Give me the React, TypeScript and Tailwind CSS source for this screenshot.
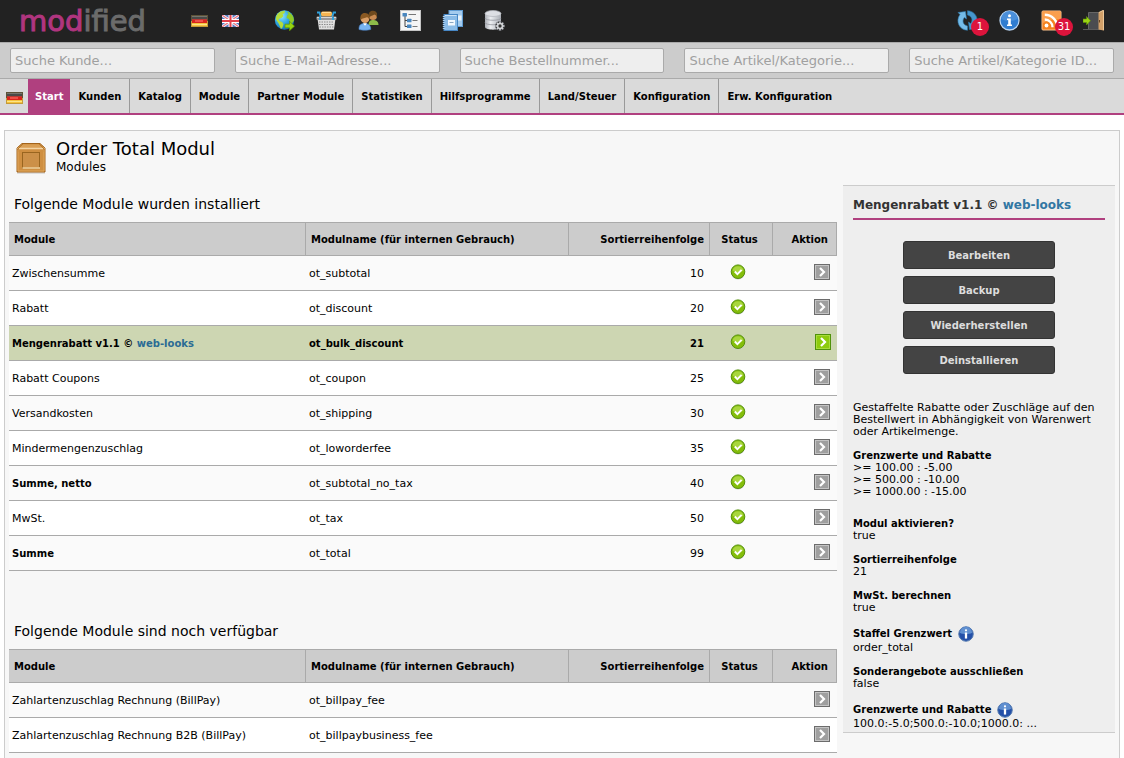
import type { ReactNode } from "react";
import clsx from "clsx";

type ModuleRow = {
  name: string;
  link?: string;
  code: string;
  sort?: number;
  bold?: boolean;
  selected?: boolean;
};

type DetailItem = {
  label: string;
  value: string;
  info?: boolean;
};

const searchFields = [
  "Suche Kunde...",
  "Suche E-Mail-Adresse...",
  "Suche Bestellnummer...",
  "Suche Artikel/Kategorie...",
  "Suche Artikel/Kategorie ID...",
];

const menuItems = [
  "Kunden",
  "Katalog",
  "Module",
  "Partner Module",
  "Statistiken",
  "Hilfsprogramme",
  "Land/Steuer",
  "Konfiguration",
  "Erw. Konfiguration",
];

const installedModules: ModuleRow[] = [
  { name: "Zwischensumme", code: "ot_subtotal", sort: 10 },
  { name: "Rabatt", code: "ot_discount", sort: 20 },
  {
    name: "Mengenrabatt v1.1 ©",
    link: "web-looks",
    code: "ot_bulk_discount",
    sort: 21,
    bold: true,
    selected: true,
  },
  { name: "Rabatt Coupons", code: "ot_coupon", sort: 25 },
  { name: "Versandkosten", code: "ot_shipping", sort: 30 },
  { name: "Mindermengenzuschlag", code: "ot_loworderfee", sort: 35 },
  { name: "Summe, netto", code: "ot_subtotal_no_tax", sort: 40, bold: true },
  { name: "MwSt.", code: "ot_tax", sort: 50 },
  { name: "Summe", code: "ot_total", sort: 99, bold: true },
];

const availableModules: ModuleRow[] = [
  { name: "Zahlartenzuschlag Rechnung (BillPay)", code: "ot_billpay_fee" },
  {
    name: "Zahlartenzuschlag Rechnung B2B (BillPay)",
    code: "ot_billpaybusiness_fee",
  },
];

const actions = ["Bearbeiten", "Backup", "Wiederherstellen", "Deinstallieren"];

const details: DetailItem[] = [
  { label: "Modul aktivieren?", value: "true" },
  { label: "Sortierreihenfolge", value: "21" },
  { label: "MwSt. berechnen", value: "true" },
  { label: "Staffel Grenzwert", value: "order_total", info: true },
  { label: "Sonderangebote ausschließen", value: "false" },
  {
    label: "Grenzwerte und Rabatte",
    value: "100.0:-5.0;500.0:-10.0;1000.0: ...",
    info: true,
  },
];

function GermanFlag() {
  return (
    <svg className="h-3 w-[17px]" viewBox="0 0 17 12">
      <rect width="17" height="12" fill="#5c5238" />
      <rect x="1" y="1" width="15" height="3" fill="#4a4a48" />
      <rect x="1" y="1" width="15" height="1" fill="#75756c" />
      <rect x="1" y="4" width="15" height="4" fill="#d8241c" />
      <rect x="1" y="4" width="15" height="1" fill="#b83a34" />
      <rect x="4" y="5" width="8" height="2" fill="#ee5048" />
      <rect x="1" y="8" width="15" height="3" fill="#f5c33c" />
      <rect x="1" y="9" width="15" height="1" fill="#fbe488" />
      <rect y="11" width="17" height="1" fill="#c49a3a" />
      <path d="M.5 6v5M16.5 6v5" stroke="#c49a3a" />
    </svg>
  );
}

function BritishFlag() {
  return (
    <svg className="h-3 w-[17px]" viewBox="0 0 17 12">
      <rect width="17" height="12" fill="#5878c0" />
      <path d="M0 0l17 12M17 0L0 12" stroke="#f4f4fa" strokeWidth="2.800" />
      <path d="M0 0l17 12M17 0L0 12" stroke="#e8707c" strokeWidth="1.100" />
      <path d="M8.500 0v12M0 6h17" stroke="#fff" strokeWidth="4" />
      <path d="M8.500 0v12M0 6h17" stroke="#e2404c" strokeWidth="2" />
    </svg>
  );
}

function GlobeIcon() {
  return (
    <svg className="size-[21px]" viewBox="0 0 21 21">
      <defs>
        <radialGradient id="globe" cx=".35" cy=".3" r=".8">
          <stop offset="0" stopColor="#8fe6ff" />
          <stop offset=".5" stopColor="#2fa6e2" />
          <stop offset="1" stopColor="#0c62ac" />
        </radialGradient>
      </defs>
      <circle cx="10.500" cy="10" r="9.700" fill="url(#globe)" />
      <path
        d="M4 3.500C6 1.500 8.500.700 11 .800L10.500 3 8.500 4.500 9.500 6 7.500 8 4.500 9 5.500 11 8 12 9.500 14 8.500 17.500 7 19C6 17 5.500 14.500 4 12.500L2 9.500C1.800 7 2.500 5 4 3.500z"
        fill="#b4dc3c"
      />
      <path
        d="M13 1.500c3 .8 5.500 3 6.500 6l.5 3-2 3-2-1.500L15 9l-2.500-1L13 5.500 14.500 4z"
        fill="#8fca28"
      />
      <path
        d="M11 14.200h4.500v-3l5 5-5 4.600v-3H11z"
        fill="#96d411"
        stroke="#5b9304"
        strokeWidth=".7"
      />
    </svg>
  );
}

function BasketIcon() {
  return (
    <svg className="size-[21px]" viewBox="0 0 21 21">
      <rect x="5" y="1.500" width="11" height="5" rx="1.500" fill="#f5b451" />
      <path d="M6 2.500h9" stroke="#ffdc98" />
      <path
        d="M1 2.500h2.500L5 8M20 2.500h-2.500L16 8"
        fill="none"
        stroke="#30a2de"
        strokeWidth="1.800"
      />
      <path d="M1.500 8.500h18L18 19.500H3z" fill="#e0e0e0" />
      <path
        d="M3 12h15M3 14.500h15M3.500 17h14"
        stroke="#8c8c8c"
        strokeWidth="1.200"
        strokeDasharray="1.500 1"
      />
      <rect x=".5" y="6.500" width="20" height="3.500" rx="1" fill="#9a9a9a" />
      <path d="M1 7.500h19" stroke="#d8d8d8" />
      <path d="M3 7h2v3H3zM16 7h2v3h-2z" fill="#30a2de" />
    </svg>
  );
}

function UsersIcon() {
  return (
    <svg className="size-[21px]" viewBox="0 0 21 21">
      <path d="M10.500 15c0-4 2-5 4.500-5s5.500 1 5.500 5z" fill="#8dbb4a" />
      <circle cx="15" cy="6" r="4" fill="#c98b52" />
      <path
        d="M10.600 6c-.4-4 2.400-5.400 4.600-5.200 3.400.2 4.600 2.700 3.600 7.200-.3-2-1-3.200-2.500-3.500-1.500 1-3.500 1.500-5.700 3z"
        fill="#6f4a1e"
      />
      <path
        d="M1 19.500c-.3-4.500 2-6 5.500-6s6.500 1.500 6.200 6c-3 1-8.700 1-11.700 0z"
        fill="#78b4f0"
        stroke="#4a80c4"
        strokeWidth=".6"
      />
      <path d="M5 13.300h4l-2 2.500z" fill="#fff" />
      <circle cx="7" cy="8.700" r="4.300" fill="#dba068" />
      <path
        d="M2.500 9.500c-.7-4.500 1.600-6.700 4.500-6.500 3.300.1 5.200 2.500 4.300 6.800-.7-1.500-1.200-2.200-2.300-2.500-2 .8-4.500.7-6.500 2.700z"
        fill="#8a5922"
      />
    </svg>
  );
}

function TreeIcon() {
  return (
    <svg className="size-[21px]" viewBox="0 0 21 21">
      <rect x=".5" y=".5" width="20" height="20" fill="#f5f5f5" stroke="#c4c4c4" />
      <path d="M5 5v11.500h3M5 10.500h3" fill="none" stroke="#444" />
      <g fill="#4a87bf">
        <rect x="2.500" y="3" width="4.500" height="3.500" rx=".5" />
        <rect x="7" y="8.800" width="4.500" height="3.500" rx=".5" />
        <rect x="7" y="14.500" width="4.500" height="3.500" rx=".5" />
      </g>
      <path d="M8.500 4.500h7.500M12.500 10.500h5M12.500 16.500h5" stroke="#777" />
    </svg>
  );
}

function BooksIcon() {
  return (
    <svg className="size-[21px]" viewBox="0 0 21 21">
      <rect x="7" y=".5" width="13.500" height="16" fill="#a4cbee" stroke="#5f9bd2" />
      <path d="M15.500 5.500h4v5h-4z" fill="#e8f2fb" />
      <rect x="2" y="4.500" width="13.500" height="16" fill="#8abbe7" stroke="#4787c5" />
      <path d="M3 5.500h11.500" stroke="#cde4f8" />
      <path d="M2 6v14" stroke="#a9cdee" strokeWidth="2.400" strokeDasharray="1 1" />
      <rect x="6" y="10" width="7" height="5.500" fill="#f2f8fe" />
      <path d="M7.500 12.500h4" stroke="#8aa6c0" />
    </svg>
  );
}

function DatabaseIcon() {
  return (
    <svg className="size-[21px]" viewBox="0 0 21 21">
      <defs>
        <linearGradient id="db">
          <stop offset="0" stopColor="#a9acb3" />
          <stop offset=".35" stopColor="#eceef1" />
          <stop offset="1" stopColor="#a9adb5" />
        </linearGradient>
      </defs>
      <path
        d="M1 3.500v13.500c0 3.500 16 3.500 16 0V3.500z"
        fill="url(#db)"
      />
      <ellipse cx="9" cy="3.500" rx="8" ry="3" fill="#dddfe4" stroke="#b2b5bb" strokeWidth=".7" />
      <path
        d="M1 8c0 3 16 3 16 0M1 12.500c0 3 16 3 16 0"
        fill="none"
        stroke="#94979e"
        strokeWidth=".8"
      />
      <circle cx="16" cy="16" r="4.800" fill="#44464a" />
      <circle cx="16" cy="16" r="2.400" fill="#333" stroke="#d4d6d9" strokeWidth="1.500" />
      <path
        d="M16 11.500v2M16 18.500v2M11.500 16h2M18.500 16h2M12.800 12.800l1.400 1.400M17.800 17.800l1.400 1.400M19.200 12.800l-1.400 1.400M14.200 17.800l-1.400 1.400"
        stroke="#d4d6d9"
        strokeWidth="1.400"
      />
    </svg>
  );
}

function RefreshIcon() {
  return (
    <svg className="size-[21px]" viewBox="0 0 21 21">
      <path
        d="M1 2.500L8.500 1.500 9.500 9 7.300 7.500C4.800 10.500 6 15 10.500 16v4.300C2.500 20-2 11.500 3 4.500z"
        fill="#74bbe8"
        stroke="#2b78ac"
        strokeWidth=".6"
      />
      <path
        d="M20 18.500L12.500 19.500 11.500 12l2.200 1.500C16.200 10.500 15 6 10.500 5V.7C18.500 1 23 9.500 18 16.500z"
        fill="#4596ce"
        stroke="#2b78ac"
        strokeWidth=".6"
      />
    </svg>
  );
}

function InfoIcon({ small }: { small?: boolean }) {
  return (
    <svg className={small ? "size-4" : "size-[21px]"} viewBox="0 0 21 21">
      <circle
        cx="10.500"
        cy="10.500"
        r="9.500"
        fill={small ? "#2450a8" : "#2f7cd0"}
        stroke={small ? "#5279ae" : "#b9d4f0"}
        strokeWidth="1.300"
      />
      <path
        d="M2.500 9a8 8 0 0 1 16 0c-4 2.500-12 2.500-16 0z"
        fill={small ? "#5f8fd0" : "#4a8fda"}
      />
      <circle cx="10.500" cy="5.700" r="1.500" fill="#fff" />
      <path
        d={small ? "M9 8.500h3v8H9z" : "M8 8.500h3.800v6H13V16H8v-1.500h1.200V10H8z"}
        fill="#fff"
      />
    </svg>
  );
}

function FeedIcon() {
  return (
    <svg className="size-[21px]" viewBox="0 0 21 21">
      <rect x="1" y="1" width="19" height="19" rx="1" fill="#f58220" stroke="#fbc18c" />
      <path d="M2 2h17v7C13 9 8 10 2 13z" fill="#fa9f4e" />
      <circle cx="5.500" cy="15.500" r="1.900" fill="#fff" />
      <path
        d="M3.800 9.500a7.700 7.700 0 0 1 7.700 7.700M3.800 4.700A12.500 12.500 0 0 1 16.300 17.200"
        fill="none"
        stroke="#fff"
        strokeWidth="2.400"
      />
    </svg>
  );
}

function DoorIcon() {
  return (
    <svg className="size-[21px]" viewBox="0 0 21 21">
      <path d="M5.500 2.500h11v17h-11z" fill="#4a4c50" stroke="#666" />
      <path d="M0 19.500h21" stroke="#5b5b5b" />
      <path d="M15.500 2.500L20.500 0v20.500l-5-1z" fill="#d2a069" />
      <path d="M16 2.500L20.500.3v20" fill="none" stroke="#edc898" />
      <path d="M16.500 10v2.500" stroke="#6b4620" />
      <path
        d="M0 9h3.500V6.500L7.500 10.800 3.500 15v-2.500H0z"
        fill="#9bd413"
        stroke="#5d9404"
        strokeWidth=".6"
      />
    </svg>
  );
}

function CrateIcon() {
  return (
    <svg className="h-8 w-[30px]" viewBox="0 0 30 32">
      <path d="M1 31h28" stroke="#ddd" strokeWidth="2" />
      <path d="M6 1.500h18l5 4.500v24H1V6z" fill="#cf8f41" stroke="#a3641c" />
      <path d="M6.500 2.500h17l4 3.500h-25z" fill="#d99f55" />
      <path d="M1.500 6.500h27" stroke="#f4d5a4" strokeWidth="1.500" />
      <path d="M7 2L2 7v3M23 2l5 5v3" fill="none" stroke="#b97b2e" />
      <rect x="6.500" y="10.500" width="17" height="15.500" fill="#cc9048" stroke="#99651f" />
      <path d="M6.500 26h17.500" stroke="#f3d6a2" strokeWidth="1.500" />
      <path d="M2 8v21h26V8" fill="none" stroke="#dfa65c" />
    </svg>
  );
}

function StatusIcon() {
  return (
    <svg className="inline-block size-4" viewBox="0 0 16 16" role="img" aria-label="aktiv">
      <circle cx="8" cy="8.500" r="7" fill="#c9c9c9" />
      <circle cx="8" cy="7.700" r="6.800" fill="#84bd0b" stroke="#55920a" />
      <path d="M2.500 6.500a5.700 5.700 0 0 1 11 0c-3 2-8 2-11 0z" fill="#a8d63e" />
      <path d="M4.800 7.500l2.600 2.600 4.200-4.200" fill="none" stroke="#fff" strokeWidth="2" />
    </svg>
  );
}

function ArrowIcon({ active }: { active?: boolean }) {
  return (
    <svg className="size-4" viewBox="0 0 16 16">
      <rect
        x=".5"
        y=".5"
        width="15"
        height="15"
        fill={active ? "#8dcb0d" : "#9f9f9f"}
        stroke={active ? "#4f920a" : "#6c6c6c"}
      />
      <rect
        x="1.500"
        y="1.500"
        width="13"
        height="13"
        fill="none"
        stroke={active ? "#a8dc3c" : "#c4c4c4"}
      />
      <path d="M6 4l4 4-4 4" fill="none" stroke="#fff" strokeWidth="2.200" />
    </svg>
  );
}

function IconLink({
  label,
  badge,
  children,
}: {
  label: string;
  badge?: number;
  children: ReactNode;
}) {
  return (
    <a href="#" aria-label={label} className="relative block">
      {children}
      {badge !== undefined && (
        <span className="absolute top-2 left-3.5 flex size-[18px] items-center justify-center rounded-full bg-[#dc143c] text-[10px] text-white">
          {badge}
        </span>
      )}
    </a>
  );
}

function ModuleTable({ title, rows }: { title: string; rows: ModuleRow[] }) {
  return (
    <section>
      <h2 className="mb-1.5 pl-[5px] text-sm leading-6">{title}</h2>
      <table className="w-full table-fixed border-separate border-spacing-0">
        <thead>
          <tr className="h-[34px] bg-[#ccc] text-left text-[10px] *:border-y *:border-r *:border-[#aaa] *:px-[5px] *:pt-0.5">
            <th>Module</th>
            <th className="w-[263px]">Modulname (für internen Gebrauch)</th>
            <th className="w-[141px] text-right">Sortierreihenfolge</th>
            <th className="w-[63px] pr-2! text-center">Status</th>
            <th className="w-16 pr-2! text-right">Aktion</th>
          </tr>
        </thead>
        <tbody>
          {rows.map((row) => (
            <tr
              key={row.code}
              className={clsx(
                "h-[35px] *:border-b *:border-[#aaa]",
                row.selected
                  ? "bg-[#cdd6b2] text-[10px] font-bold"
                  : "odd:bg-[#fafafa] even:bg-white",
              )}
            >
              <td className={clsx("pt-0.5 pl-[3px]", row.bold && "text-[10px] font-bold")}>
                {row.name}
                {row.link && (
                  <>
                    {" "}
                    <a href="#" className="text-[#2a6b94]">
                      {row.link}
                    </a>
                  </>
                )}
              </td>
              <td className="pt-0.5 pl-[3px]">{row.code}</td>
              <td className="pt-0.5 pr-1.5 text-right">{row.sort}</td>
              <td className="pr-2 pb-0.5 text-center">
                {row.sort !== undefined && <StatusIcon />}
              </td>
              <td className={clsx("pb-0.5", row.selected ? "pr-1.5" : "pr-[7px]")}>
                <a
                  href="#"
                  aria-label={`${row.code} auswählen`}
                  className="flex justify-end"
                >
                  <ArrowIcon active={row.selected} />
                </a>
              </td>
            </tr>
          ))}
        </tbody>
      </table>
    </section>
  );
}

export default function App() {
  return (
    <div className="flex min-h-screen flex-col bg-white font-['DejaVu_Sans',Verdana,sans-serif] text-[11px] leading-3 text-black">
      <header className="flex h-[42px] items-center justify-between bg-[#222] pr-5 pb-px pl-[19px]">
        <div className="flex items-center">
          <a
            href="#"
            className="w-[172px] text-[29px] leading-10 text-[#6b6b6b] [-webkit-text-stroke:1px]"
          >
            <span className="text-[#b0357f]">mod</span>ified
          </a>
          <div className="flex gap-3.5">
            <IconLink label="Deutsch">
              <GermanFlag />
            </IconLink>
            <IconLink label="English">
              <BritishFlag />
            </IconLink>
          </div>
          <nav className="ml-[35px] flex gap-[21px]">
            <IconLink label="Shop">
              <GlobeIcon />
            </IconLink>
            <IconLink label="Bestellungen">
              <BasketIcon />
            </IconLink>
            <IconLink label="Kunden">
              <UsersIcon />
            </IconLink>
            <IconLink label="Kategorien">
              <TreeIcon />
            </IconLink>
            <IconLink label="Content Manager">
              <BooksIcon />
            </IconLink>
            <IconLink label="Datenbank">
              <DatabaseIcon />
            </IconLink>
          </nav>
        </div>
        <nav className="flex gap-[21px]">
          <IconLink label="Updates" badge={1}>
            <RefreshIcon />
          </IconLink>
          <IconLink label="Info">
            <InfoIcon />
          </IconLink>
          <IconLink label="News" badge={31}>
            <FeedIcon />
          </IconLink>
          <IconLink label="Abmelden">
            <DoorIcon />
          </IconLink>
        </nav>
      </header>

      <div className="grid h-[37px] grid-cols-5 items-center border-y border-[#aaa] bg-[#ccc]">
        {searchFields.map((field) => (
          <form key={field} className="px-2.5">
            <input
              type="text"
              aria-label={field}
              placeholder={field}
              className="block h-[25px] w-full rounded-xs border border-[#aaa] bg-[#eee] px-1 text-[13px] placeholder:text-[#a0a0a0]"
            />
          </form>
        ))}
      </div>

      <nav className="flex h-9 items-stretch border-b-2 border-[#b0407f] bg-[#dadada] text-[10px] font-bold">
        <a href="#" aria-label="Deutsch" className="flex items-center pt-1 pr-[5px] pl-1.5">
          <GermanFlag />
        </a>
        <a href="#" className="flex items-center bg-[#b0407f] px-[7px] pt-0.5 text-white">
          Start
        </a>
        {menuItems.map((item) => (
          <a
            key={item}
            href="#"
            className="flex items-center border-r border-[#999] px-2 pt-0.5 last:border-r-0"
          >
            {item}
          </a>
        ))}
      </nav>

      <main className="mx-1 mt-[15px] flex-1 border border-b-0 border-[#ccc] bg-[#f7f7f7] px-1 pt-2">
        <div className="flex gap-2.5 pl-[7px]">
          <div className="pt-[3px]">
            <CrateIcon />
          </div>
          <div>
            <h1 className="text-lg leading-5">Order Total Modul</h1>
            <p className="text-xs leading-4">Modules</p>
          </div>
        </div>

        <div className="mt-2.5 flex items-start gap-1.5">
          <div className="min-w-0 flex-1 space-y-12 pt-[7px]">
            <ModuleTable
              title="Folgende Module wurden installiert"
              rows={installedModules}
            />
            <ModuleTable
              title="Folgende Module sind noch verfügbar"
              rows={availableModules}
            />
          </div>

          <aside className="w-[272px] shrink-0 border-y border-[#ccc] bg-[#eee] px-2.5 pt-[9px] pb-0.5">
            <h2 className="border-b-2 border-[#b0407f] pb-[3px] text-xs leading-5 font-bold text-[#333]">
              Mengenrabatt v1.1 ©{" "}
              <a href="#" className="text-[#3277a3]">
                web-looks
              </a>
            </h2>
            <div className="mx-auto mt-[21px] flex w-[152px] flex-col gap-[7px]">
              {actions.map((action) => (
                <button
                  key={action}
                  type="button"
                  className="h-7 rounded-[3px] border border-[#333] bg-[#444] pt-0.5 text-[10px] font-bold text-[#ddd]"
                >
                  {action}
                </button>
              ))}
            </div>
            <p className="mt-7">
              Gestaffelte Rabatte oder Zuschläge auf den Bestellwert in
              Abhängigkeit von Warenwert oder Artikelmenge.
            </p>
            <p className="mt-3 text-[10px] font-bold">Grenzwerte und Rabatte</p>
            <p>&gt;= 100.00 : -5.00</p>
            <p>&gt;= 500.00 : -10.00</p>
            <p>&gt;= 1000.00 : -15.00</p>
            <dl className="mt-5 space-y-3">
              {details.map((detail) => (
                <div key={detail.label}>
                  <dt className="flex items-center gap-1.5 text-[10px] font-bold">
                    {detail.label}
                    {detail.info && <InfoIcon small />}
                  </dt>
                  <dd>{detail.value}</dd>
                </div>
              ))}
            </dl>
          </aside>
        </div>
      </main>
    </div>
  );
}
